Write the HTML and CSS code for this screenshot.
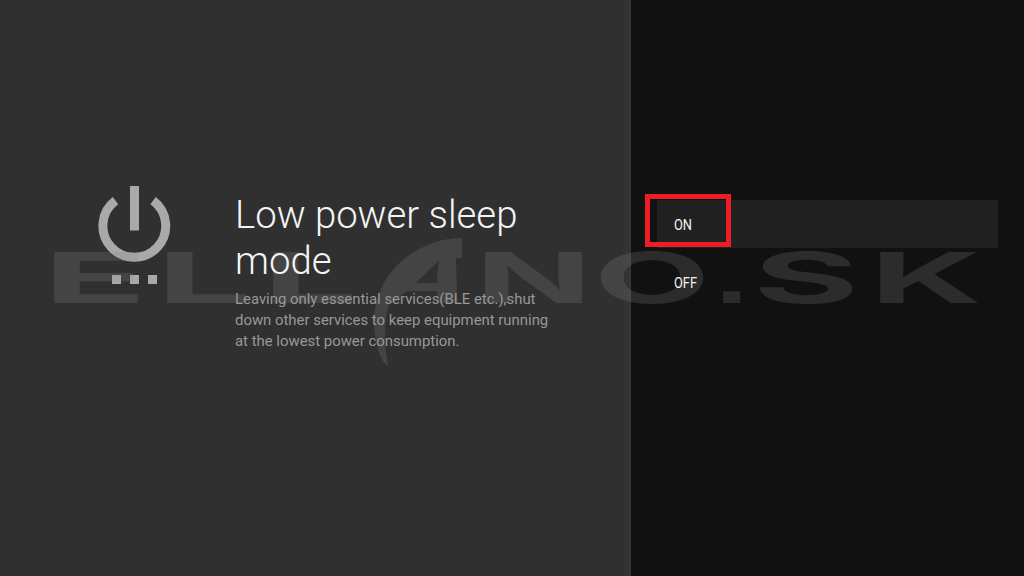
FILE: index.html
```html
<!DOCTYPE html>
<html lang="en">
<head>
    <meta charset="UTF-8">
    <meta name="viewport" content="width=device-width, initial-scale=1.0">
    <title>Low power sleep mode</title>
    <link rel="stylesheet" href="styles.css">
</head>
<body>
    <main class="info">
        <svg class="power-icon" viewBox="0 0 74 102">
            <path class="ring" d="M18.5 15.7 A31.4 31.4 0 1 0 56.1 15.7" />
            <rect x="33" y="1" width="9" height="44.5" />
            <rect x="15" y="90" width="9" height="9" />
            <rect x="33" y="90" width="9" height="9" />
            <rect x="51" y="90" width="9" height="9" />
        </svg>
        <div class="info-text">
            <h1>Low power sleep mode</h1>
            <p>Leaving only essential services(BLE etc.),shut<br>down other services to keep equipment running<br>at the lowest power consumption.</p>
        </div>
    </main>

    <aside class="options">
        <div class="option selected"><span>ON</span></div>
        <div class="option"><span>OFF</span></div>
    </aside>

    <!-- Site watermark -->
    <svg class="watermark" viewBox="0 0 1024 576">
        <g class="letters">
            <text x="43" y="303" textLength="104" lengthAdjust="spacingAndGlyphs">E</text>
            <text x="156" y="303" textLength="96" lengthAdjust="spacingAndGlyphs">L</text>
            <text x="262" y="303" textLength="96" lengthAdjust="spacingAndGlyphs">L</text>
            <text transform="translate(370 303) skewX(-30)" textLength="90" lengthAdjust="spacingAndGlyphs">A</text>
            <path d="M462 238 C420 238 373 270 374 325 C375 343 379 357 386 365 L388 365 C384 345 383 322 390 300 C398 280 415 262 438 259 L462 258 Z" />
            <text x="475" y="303" textLength="117" lengthAdjust="spacingAndGlyphs">N</text>
            <text x="594" y="303" textLength="116" lengthAdjust="spacingAndGlyphs">O</text>
            <text class="dot" x="715" y="303" textLength="33.5" lengthAdjust="spacingAndGlyphs">.</text>
            <text x="753" y="303" textLength="106" lengthAdjust="spacingAndGlyphs">S</text>
            <text x="870" y="303" textLength="112" lengthAdjust="spacingAndGlyphs">K</text>
        </g>
    </svg>

    <div class="highlight"></div>
</body>
</html>
```
FILE: styles.css
```css
body {
    display: flex;
    position: relative;
    width: 1024px;
    height: 576px;
    margin: 0;
    overflow: hidden;
    background-color: #111111;
    color: #f4f4f4;
    font-family: Roboto, sans-serif;
}

/* Left panel */
.info {
    box-sizing: border-box;
    display: flex;
    align-items: flex-start;
    gap: 64px;
    width: 631px;
    padding: 185px 0 0 97px;
    background: linear-gradient(to right, #303030 622px, #353535 630px);
}

.power-icon {
    width: 74px;
    height: 102px;
    fill: #a9aaa8;
}

.power-icon .ring {
    fill: none;
    stroke: #a9aaa8;
    stroke-width: 9;
}

.info-text {
    position: relative;
    z-index: 1;
    width: 330px;
    padding-top: 7px;
}

h1 {
    margin: 0;
    font-size: 38.3px;
    font-weight: 300;
    line-height: 46px;
}

p {
    margin: 5px 0 0;
    font-size: 14.9px;
    line-height: 21px;
    color: #989898;
    white-space: nowrap;
}

/* Right panel */
.options {
    display: flex;
    flex-direction: column;
    gap: 10px;
    width: 341px;
    padding: 200px 26px 0;
}

.option {
    display: flex;
    align-items: center;
    height: 48px;
    padding-left: 17px;
    font-size: 15.5px;
}

.option span {
    position: relative;
    z-index: 1;
    transform: scaleX(0.83);
    transform-origin: left;
    padding-top: 2px;
}

.option.selected {
    background-color: #212121;
}

/* Watermark over both panels */
.watermark {
    position: absolute;
    top: 0;
    left: 0;
    width: 1024px;
    height: 576px;
}

.letters {
    fill: #8c8c8c;
    opacity: 0.22;
    font-family: Inter, "Liberation Sans", sans-serif;
    font-size: 70px;
    font-weight: 700;
}

.letters .dot {
    font-family: "Liberation Sans", sans-serif;
    font-size: 78px;
}

.highlight {
    position: absolute;
    box-sizing: border-box;
    top: 194px;
    left: 645px;
    width: 86px;
    height: 53px;
    border: 5px solid #ee1c25;
}
```
